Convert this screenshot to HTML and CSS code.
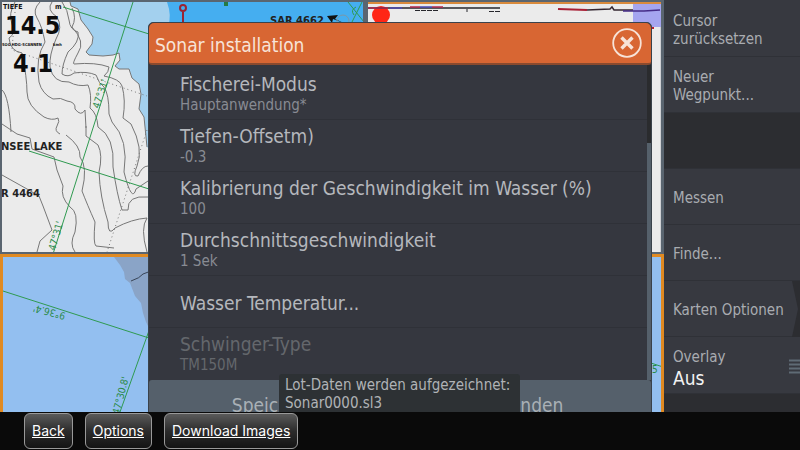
FILE: index.html
```html
<!DOCTYPE html>
<html lang="de">
<head>
    <meta charset="UTF-8">
    <meta name="viewport" content="width=device-width, initial-scale=1.0">
    <title>Sonar installation</title>
    <link rel="stylesheet" href="styles.css">
</head>
<body>
    <div class="screen">
        <main class="main">
            <div class="panels">
                <!-- Karte oben links -->
                <section class="panel chart-panel">
                    <svg class="map" aria-hidden="true">
                        <rect width="100%" height="100%" fill="#45aef0"/>
                        <path d="M0 0H165Q170 14 166 24V250H0Z" fill="#a3d0ee"/>
                        <path d="M0 0H68L69 4L76 7L79 18L86 27L91 35L90 42L84 50L87 53L101 54L111 53L117 51L118 58L113 64L117 67L127 67L130 76L137 82L139 92L137 107L142 115L145 145L150 150V250H0Z" fill="#ebebeb"/>
                        <g class="contour">
                            <path d="M68 0L69 4L76 7L79 18L86 27L91 35L90 42L84 50L87 53L101 54L111 53L117 51L118 58L113 64L117 67L127 67L130 76L137 82L139 92L137 107L142 115L145 145"/>
                            <path d="M13 0Q6 12 10 22T7 36Q8 49 20 51Q25 76 25 90T42 115Q50 119 56 116Q58 119 55 124Q52 129 58 132"/>
                            <path d="M38 0Q30 8 35 16T43 40Q33 56 37 80Q40 92 51 97Q59 95 65 99Q74 100 73 107Q79 115 83 108L84 126"/>
                            <path d="M50 0Q44 8 55 15Q61 25 54 37Q47 53 48 65Q51 81 67 80Q76 85 86 83Q90 92 88 106Q95 111 96 125"/>
                            <path d="M60 0Q66 8 67 18T76 30Q78 40 66 50Q60 63 60 72Q66 76 72 71Q85 69 94 73Q97 82 102 85Q107 92 107 112L110 120"/>
                            <path d="M70 6Q75 16 70 25Q84 40 76 51Q70 62 72 62Q94 60 107 65Q107 70 102 74Q118 77 120 84Q124 98 121 116L129 122"/>
                            <path d="M0 88Q7 94 9 130M0 122L15 132L28 136L30 147L52 155L55 168L61 184Q58 195 68 205Q77 210 73 230Q67 242 73 250"/>
                            <path d="M64 133Q79 144 78 155Q86 165 80 189Q85 202 93 220Q91 242 94 244L112 246"/>
                            <path d="M84 124V134L96 143Q101 153 97 170Q98 195 106 220Q106 235 113 226Q130 217 145 216Q138 226 145 250"/>
                            <path d="M96 125Q113 135 111 165Q115 193 120 208H126Q125 193 146 195"/>
                            <path d="M110 120Q127 138 122 170Q130 202 134 187L146 179"/>
                            <path d="M129 122Q142 147 135 164Q130 175 136 174Q140 164 146 164"/>
                            <path d="M0 173L25 187L37 194L41 204L50 228L38 239L35 250"/>
                        </g>
                        <path class="dotted" d="M13 10L10 48L145 94M145 128L105 250"/>
                        <path class="grid-line" d="M131 0L51 252M61 5L147 32L164 36M27 149L147 187"/>
                        <text class="grid-label" transform="translate(97 107) rotate(-72)">47°31'</text>
                        <text class="grid-label" transform="translate(53 249) rotate(-74)">47°31'</text>
                        <text class="place" x="-1" y="148">NSEE LAKE</text>
                        <text class="place" x="-1" y="195">R 4464</text>
                        <text class="place" x="268" y="22">SAR 4662</text>
                        <text class="data-label" x="1" y="7">TIEFE</text>
                        <text class="data-label" x="53" y="7">m</text>
                        <text class="data-value" x="3" y="32">14.5</text>
                        <text class="data-small" x="0" y="44">SOG HDG-SCANNEN</text>
                        <text class="data-small" x="51" y="44">kmh</text>
                        <text class="data-value" x="11" y="70">4.1</text>
                        <path d="M181 10V24" stroke="#9a2434" stroke-width="2"/>
                        <circle cx="181" cy="6" r="3" fill="none" stroke="#9a2434" stroke-width="2"/>
                        <path d="M224 0V4" stroke="#257a45" stroke-width="4"/>
                        <path d="M325 14L336 13L333 17L344 22L331 17L330 21Z" fill="#111"/>
                        <circle cx="341" cy="19" r="6" fill="none" stroke="#7c98a6"/>
                        <path class="grid-line" d="M346 0L362 20M360 0L350 20M354 5Q348 8 352 13"/>
                    </svg>
                </section>

                <!-- Echolot oben rechts -->
                <section class="panel sonar-panel">
                    <svg class="map" aria-hidden="true">
                        <rect width="100%" height="100%" fill="#ebebeb"/>
                        <rect x="265" width="28" height="23" fill="#a5a5ef"/>
                        <circle cx="13" cy="11" r="9" fill="#ff2616"/>
                        <path d="M0 4H132" stroke="#26262c" stroke-width="1.5"/>
                        <path d="M0 4H20M42 3H52M64 3H75" stroke="#b22a50" stroke-width="1.5"/>
                        <path d="M52 3H64M22 4H34" stroke="#4c4bb4" stroke-width="1.5"/>
                        <path d="M47 6.5H70M99 5V8M121 7.5H132" stroke="#26262c" stroke-dasharray="5 1"/>
                        <path d="M190 5L219 6" stroke="#a82036" stroke-width="2"/>
                        <path d="M219 6L242 5L244 3L246 6H265" stroke="#342731" stroke-width="1.5" fill="none"/>
                        <path d="M255 7H276L292 6" stroke="#452c88" stroke-width="1.5" fill="none"/>
                        <path d="M282 24H286" stroke="#b22030" stroke-width="2"/>
                    </svg>
                </section>

                <!-- aktive Karte unten -->
                <section class="panel active-panel">
                    <svg class="map" aria-hidden="true">
                        <rect width="100%" height="100%" fill="#93bff0"/>
                        <path d="M111 0L117 8L121 15L122 22L127 26L132 39L138 46L140 56L143 65L146 71V0Z" fill="#8aa4c7"/>
                        <path d="M128 24Q137 21 140 17L148 14" fill="none" stroke="#394557"/>
                        <path class="grid-line" d="M0 34L146 81L160 85M148 68L117 155M648 106L660 110"/>
                        <text class="grid-label" transform="translate(63 56) rotate(195)">9°36.4'</text>
                        <text class="grid-label" transform="translate(116 158) rotate(-75)">47°30.8'</text>
                        <text class="grid-label" x="649" y="116">5</text>
                    </svg>
                </section>
            </div>

            <div class="dialog" role="dialog" aria-labelledby="dialog-title">
                <header class="dialog-header">
                    <h1 id="dialog-title">Sonar installation</h1>
                    <button class="close" type="button" aria-label="Schließen">
                        <svg width="30" height="30" viewBox="0 0 30 30">
                            <circle cx="15" cy="15" r="13.8" fill="none" stroke="#f7e3d8" stroke-width="1.8"/>
                            <path d="M9.5 9.5L20.5 20.5M20.5 9.5L9.5 20.5" stroke="#f7e3d8" stroke-width="3.4"/>
                        </svg>
                    </button>
                </header>
                <div class="dialog-body">
                    <div class="settings">
                        <button class="setting" type="button">Fischerei-Modus<small>Hauptanwendung*</small></button>
                        <button class="setting" type="button">Tiefen-Offsetm)<small>-0.3</small></button>
                        <button class="setting" type="button">Kalibrierung der Geschwindigkeit im Wasser (%)<small>100</small></button>
                        <button class="setting" type="button">Durchschnittsgeschwindigkeit<small>1 Sek</small></button>
                        <button class="setting single" type="button">Wasser Temperatur...</button>
                        <button class="setting" type="button" disabled>Schwinger-Type<small>TM150M</small></button>
                    </div>
                    <div class="scrollbar"><div class="thumb"></div></div>
                </div>
                <footer class="dialog-footer">
                    <button type="button">Speichern</button>
                    <button type="button">Beenden</button>
                </footer>
            </div>

            <div class="toast" role="status">Lot-Daten werden aufgezeichnet:<br>Sonar0000.sl3</div>
        </main>

        <nav class="sidebar">
            <button class="item" type="button">Cursor<br>zurücksetzen</button>
            <button class="item" type="button">Neuer<br>Wegpunkt...</button>
            <div class="item empty"></div>
            <button class="item" type="button">Messen</button>
            <button class="item" type="button">Finde...</button>
            <button class="item submenu" type="button"><span>Karten Optionen</span>
                <svg class="notch" width="8" height="56" viewBox="0 0 8 56"><path d="M0 0H8V56H0L6 28Z" fill="#2c2d31"/></svg>
            </button>
            <button class="item overlay" type="button">
                <span>Overlay<strong>Aus</strong></span>
                <svg width="11" height="16" viewBox="0 0 11 16"><path d="M0 1.5H11M0 5.5H11M0 9.5H11M0 13.5H11" stroke="#5f6b75" stroke-width="2"/></svg>
            </button>
        </nav>
    </div>

    <div class="toolbar">
        <a href="#">Back</a>
        <a href="#">Options</a>
        <a href="#">Download Images</a>
    </div>
</body>
</html>
```

FILE: styles.css
```css
* {
    margin: 0;
    padding: 0;
    box-sizing: border-box;
}

body {
    height: 100vh;
    display: flex;
    flex-direction: column;
    overflow: hidden;
    background-color: #0a0a0a;
    font-family: "DejaVu Sans Condensed", "DejaVu Sans", sans-serif;
}

button {
    border: 0;
    background: none;
    font: inherit;
    color: inherit;
    text-align: left;
}

.screen {
    flex: 1;
    min-height: 0;
    display: flex;
    overflow: hidden;
}

.main {
    flex: 1;
    min-width: 0;
    position: relative;
    overflow: hidden;
}

/* Kartenfenster */
.panels {
    height: 100%;
    display: grid;
    grid-template-columns: 11fr 9fr;
    grid-template-rows: 254px 1fr;
    background-color: #5a6570;
}

.panel {
    min-width: 0;
    min-height: 0;
    overflow: hidden;
}

.chart-panel {
    padding: 2px;
}

.sonar-panel {
    padding: 2px 3px 2px 3px;
}

.sonar-panel .map {
    border-top: 2px solid #d98a3c;
}

.active-panel {
    grid-column: 1 / 3;
    border: 3px solid #e08a22;
    border-bottom: 0;
}

.map {
    display: block;
    width: 100%;
    height: 100%;
}

.contour {
    fill: none;
    stroke: #777;
}

.dotted {
    fill: none;
    stroke: #777;
    stroke-dasharray: 1 3;
}

.grid-line {
    fill: none;
    stroke: #2f9a50;
}

.grid-label {
    font-size: 10px;
    fill: #2a8a48;
}

.place {
    font: bold 10px "DejaVu Sans", sans-serif;
    fill: #222;
}

.data-label {
    font-size: 7px;
    font-weight: bold;
    fill: #111;
}

.data-small {
    font-size: 4px;
    font-weight: bold;
    fill: #111;
}

.data-value {
    font-size: 25px;
    font-weight: bold;
    fill: #0c0c0c;
}

/* Dialog */
.dialog {
    position: absolute;
    top: 22px;
    left: 148px;
    right: 12px;
    border: 1px solid #3a424b;
    border-radius: 5px 5px 0 0;
    background-color: #35373f;
    color: #b5b8bd;
    font-size: 19px;
}

.dialog-header {
    height: 42px;
    padding: 0 9px 0 6px;
    display: flex;
    align-items: center;
    justify-content: space-between;
    border-bottom: 2px solid #8a4a2e;
    border-radius: 5px 5px 3px 3px;
    background-color: #d86633;
    color: #f7e3d8;
}

.dialog-header h1 {
    font-size: 19px;
    font-weight: normal;
    padding-top: 3px;
}

.close {
    height: 30px;
}

.close svg {
    display: block;
}

.dialog-body {
    display: flex;
}

.settings {
    flex: 1;
    padding-top: 3px;
}

.setting {
    display: flex;
    flex-direction: column;
    justify-content: center;
    width: 100%;
    height: 52px;
    padding: 0 0 0 31px;
    line-height: 22px;
    border-bottom: 1px solid #2f3138;
}

.setting:last-child {
    border-bottom: 0;
}

.setting small {
    font-size: 15px;
    line-height: 20px;
    color: #888b93;
}

.setting.single {
    padding-top: 3px;
}

.setting:disabled,
.setting:disabled small {
    color: #64676c;
}

.scrollbar {
    width: 4px;
    padding-top: 78px;
    display: flex;
    background-color: #2a2b2e;
}

.thumb {
    flex: 1;
    background-color: #55606b;
}

.dialog-footer {
    display: flex;
    height: 50px;
    background-color: #55606b;
    border-radius: 3px 3px 0 0;
}

.dialog-footer button {
    flex: 1;
    text-align: center;
    color: #a9b0b6;
}

.toast {
    position: absolute;
    left: 279px;
    bottom: 0;
    padding: 2px 10px 0 6px;
    border-radius: 3px 3px 0 0;
    background-color: #2d3134;
    color: #b0b3b6;
    font-size: 15px;
    line-height: 18px;
}

/* Menü rechts */
.sidebar {
    width: 136px;
    background-color: #2c2d31;
    color: #a9acb1;
    font-size: 15px;
    line-height: 18px;
}

.item {
    display: flex;
    align-items: center;
    width: 100%;
    height: 56px;
    padding: 3px 0 0 9px;
    border-bottom: 1px solid #2f3137;
    background-color: #373940;
}

.item:first-child {
    height: 57px;
}

.item.empty {
    background-color: #2c2d31;
}

.submenu {
    padding-top: 0;
    justify-content: space-between;
}

.submenu span {
    padding-top: 3px;
}

.overlay {
    height: 57px;
    justify-content: space-between;
}

.overlay span {
    padding-top: 4px;
}

.item strong {
    display: block;
    font-size: 19px;
    font-weight: normal;
    line-height: 24px;
    color: #f2f2f2;
}

/* Fußleiste */
.toolbar {
    height: 38px;
    padding: 0 24px;
    display: flex;
    align-items: center;
    gap: 12px;
    background-color: #0a0a0a;
}

.toolbar a {
    padding: 0 7px;
    border: 1px solid #999;
    border-radius: 6px;
    background: linear-gradient(#5a5a5a, #2c2c2c 50%, #141414);
    color: #fff;
    font-family: Inter, sans-serif;
    font-size: 14px;
    line-height: 34px;
}
```
